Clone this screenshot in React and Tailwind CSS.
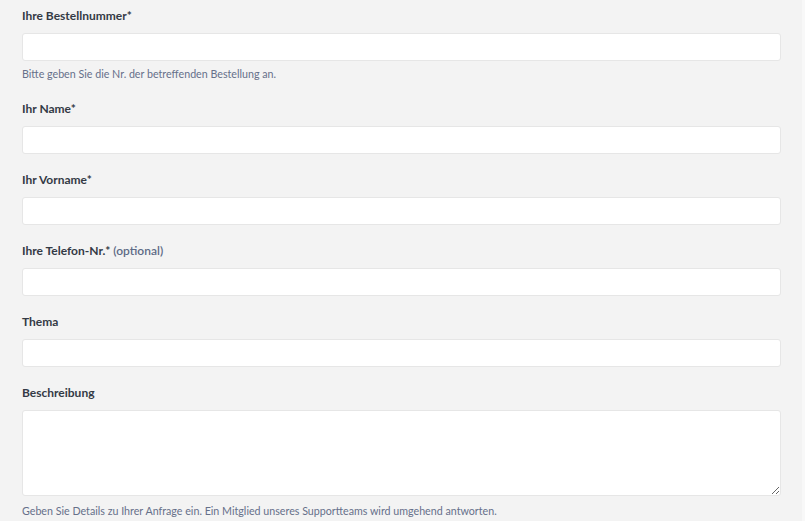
import React from 'react';

const fields = [
  { label: 'Ihre Bestellnummer*', help: 'Bitte geben Sie die Nr. der betreffenden Bestellung an.' },
  { label: 'Ihr Name*' },
  { label: 'Ihr Vorname*' },
  { label: 'Ihre Telefon-Nr.*', optional: true },
  { label: 'Thema' },
];

function Field({ label, help, optional }) {
  return (
    <div className="flex flex-col">
      <label className="h-[18px] text-[12px] leading-[20px] font-bold text-[#333a45]">
        {label}
        {optional && <span className="font-semibold text-[#5d6a86]"> (optional)</span>}
      </label>
      <input
        type="text"
        className="mt-[9px] h-[28px] w-full rounded-[3px] border border-[#e6e6e6] bg-white px-2 text-[12px] outline-none"
      />
      {help && <p className="mt-[6px] mb-[2px] text-[10.7px] leading-[14px] text-[#66708a]">{help}</p>}
    </div>
  );
}

export default function App() {
  return (
    <div className="min-h-[521px] w-full bg-[#f8f8f8]" style={{ fontFamily: 'Lato, "Liberation Sans", sans-serif' }}>
      <div className="w-[802px] bg-[#f3f3f3] pl-[22px] pr-[21px] pt-[6px] pb-[4px]">
        <div className="flex flex-col gap-[16px]">
          {fields.map(f => (
            <Field key={f.label} {...f} />
          ))}
          <div className="flex flex-col">
            <label className="h-[18px] text-[12px] leading-[20px] font-bold text-[#333a45]">Beschreibung</label>
            <textarea className="mt-[9px] h-[86px] w-full rounded-[3px] border border-[#e6e6e6] bg-white px-2 text-[12px] outline-none" />
            <p className="mt-[8px] text-[10.7px] leading-[14px] text-[#66708a]">
              Geben Sie Details zu Ihrer Anfrage ein. Ein Mitglied unseres Supportteams wird umgehend antworten.
            </p>
          </div>
        </div>
      </div>
    </div>
  );
}
